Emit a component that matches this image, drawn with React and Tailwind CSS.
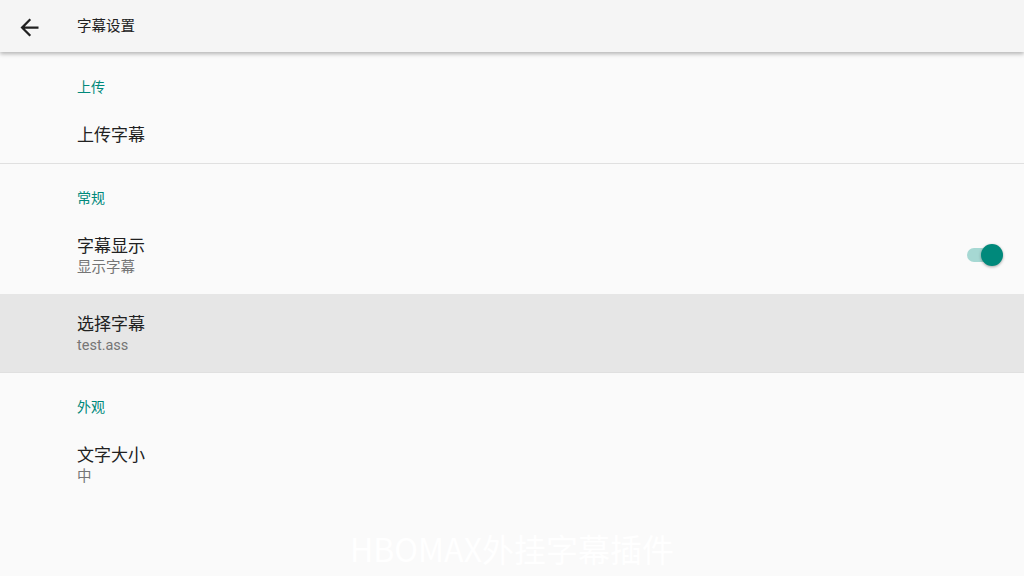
import React from "react";

const font = { fontFamily: "Roboto, 'Noto Sans CJK SC', sans-serif" };

function Category({ children, h = "h-[52px]", pt = "pt-[24px]" }) {
  return (
    <div className={`${h} ${pt} pl-[77px] text-[14px] leading-[20px] text-[#00897b]`}>
      {children}
    </div>
  );
}

function Item({ title, summary, selected, right, h }) {
  return (
    <div
      className={`flex items-center justify-between pl-[77px] pr-[21px] ${h} ${
        selected ? "bg-[#e6e6e6]" : ""
      }`}
    >
      <div className="flex flex-col pt-[3px]">
        <div className="text-[17px] leading-[22px] text-[#212121]">{title}</div>
        {summary && (
          <div className="text-[14.5px] leading-[22px] text-[#757575]">{summary}</div>
        )}
      </div>
      {right}
    </div>
  );
}

function Toggle() {
  return (
    <div className="relative w-[36px] h-[22px] flex items-center">
      <div className="w-[34px] h-[14px] rounded-full bg-[#a6d8d3]" />
      <div className="absolute right-0 top-0 w-[22px] h-[22px] rounded-full bg-[#00897b] shadow-[0_1px_3px_rgba(0,0,0,0.35)]" />
    </div>
  );
}

export default function App() {
  return (
    <div className="relative w-[1024px] h-[576px] overflow-hidden bg-[#fafafa]" style={font}>
      <div className="relative z-10 h-[52px] bg-[#f5f5f5] flex items-center shadow-[0_2px_4px_rgba(0,0,0,0.28)]">
        <div className="w-[77px] flex items-center pl-[16px]">
          <svg width="27" height="27" viewBox="0 0 24 24" className="mt-[2px]">
            <path
              d="M20 11H7.83l5.59-5.59L12 4l-8 8 8 8 1.41-1.41L7.83 13H20v-2z"
              fill="#212121"
            />
          </svg>
        </div>
        <div className="text-[14.5px] text-[#212121] pt-[2px]">字幕设置</div>
      </div>

      <div className="flex flex-col">
        <Category h="h-[52px]" pt="pt-[25px]">上传</Category>
        <Item title="上传字幕" h="h-[59px]" />
        <div className="h-px bg-[#e0e0e0]" />
        <Category h="h-[52px]" pt="pt-[24px]">常规</Category>
        <Item title="字幕显示" summary="显示字幕" h="h-[78px]" right={<Toggle />} />
        <Item title="选择字幕" summary="test.ass" selected h="h-[78px]" />
        <div className="h-px bg-[#e0e0e0]" />
        <Category h="h-[52px]" pt="pt-[24px]">外观</Category>
        <Item title="文字大小" summary="中" h="h-[78px]" />
      </div>

      <div className="absolute left-0 right-0 bottom-[8px] flex justify-center">
        <div className="text-[32px] leading-[40px] text-white" style={{ fontFamily: "'Noto Sans CJK SC', sans-serif" }}>
          HBOMAX外挂字幕插件
        </div>
      </div>
    </div>
  );
}
